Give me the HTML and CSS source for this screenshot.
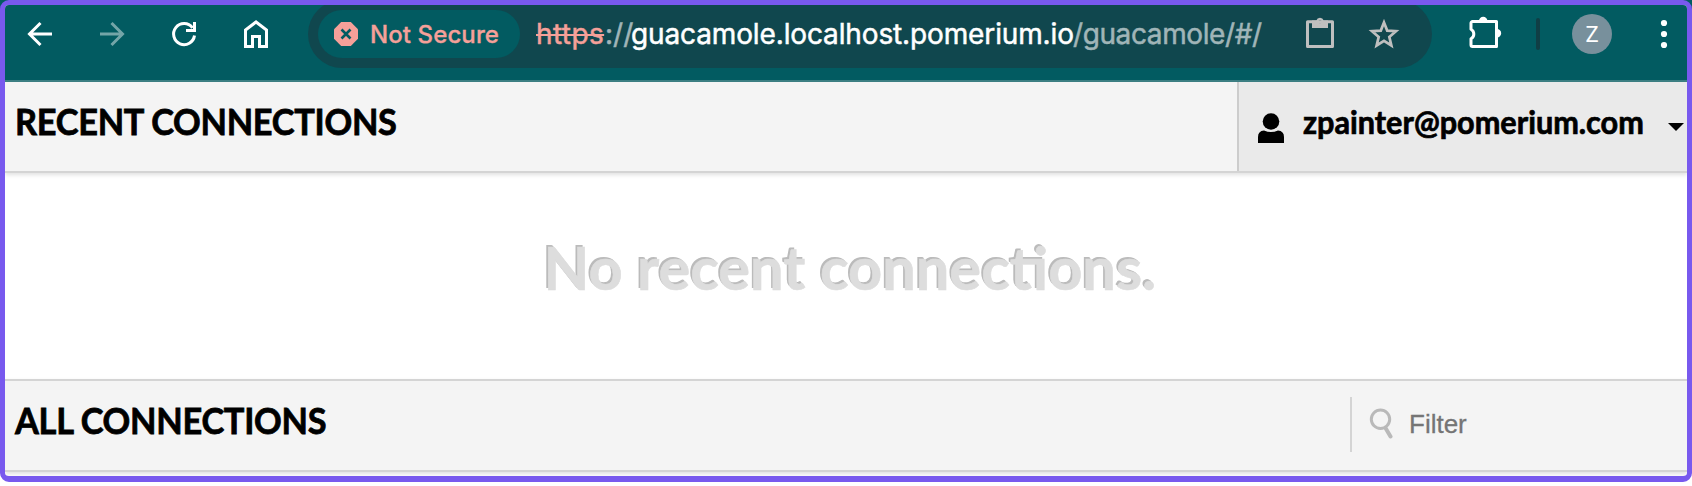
FILE: index.html
```html
<!DOCTYPE html>
<html lang="en">
<head>
<meta charset="utf-8">
<title>Recent Connections</title>
<link rel="stylesheet" href="styles.css">
</head>
<body>
<div class="window">
  <div class="toolbar">
    <nav class="nav">
      <svg class="icon" viewBox="0 0 32 32"><path d="M28 16H6M16.500 5L5.500 16l11 11"/></svg>
      <svg class="icon dim" viewBox="0 0 32 32"><path d="M4 16h22M15.500 5l11 11-11 11"/></svg>
      <svg class="icon" viewBox="0 0 32 32"><path d="M26.500 17.500A10.500 10.500 0 1 1 24.500 9.800M26.500 4v8.500H18"/></svg>
      <svg class="icon" viewBox="0 0 32 32"><path d="M5.500 28.500V12L16 4l10.500 8v16.500h-7V18.500h-7v10z"/></svg>
    </nav>
    <div class="omnibox">
      <div class="chip">
        <svg class="octagon" viewBox="0 0 24 24"><path fill="#f5a099" d="M7.200 0h9.600L24 7.200v9.600L16.800 24H7.200L0 16.800V7.200z"/><path d="M7.500 7.500l9 9M16.500 7.500l-9 9" stroke="#025b61" stroke-width="2.600" fill="none"/></svg>
        <span class="chip-label">Not Secure</span>
      </div>
      <div class="url"><span class="scheme">https</span><span class="soft sep">://</span><span class="host">guacamole.localhost.pomerium.io</span><span class="soft path">/guacamole/#/</span></div>
      <svg class="action clipboard" viewBox="0 0 32 32"><path d="M3.500 4.800h25v24.700h-25z" fill="none" stroke="#bfbfbf" stroke-width="3" stroke-linejoin="round"/><path fill="#bfbfbf" fill-rule="evenodd" d="M8 3.500h4.300a3.900 3.900 0 0 1 7.400 0H24V11H8zM16 2.900a1.700 1.700 0 1 0 0 3.400a1.700 1.700 0 0 0 0-3.400z"/></svg>
      <svg class="action star" viewBox="0 0 32 32"><path d="M16 4.500l3.200 8.100 8.800.6-6.700 5.700 2.100 8.600L16 22.900l-7.400 4.600 2.100-8.600L4 13.200l8.800-.6z" fill="none" stroke="#bfbfbf" stroke-width="2.700"/></svg>
    </div>
    <svg class="puzzle" viewBox="0 0 36 36"><path d="M5.500 6.500h24v25h-24a1.500 1.500 0 0 1-1.500-1.500v-6.200a5.500 5.500 0 0 0 0-9.600V8a1.500 1.500 0 0 1 1.500-1.500z" fill="none" stroke="#fff" stroke-width="3" stroke-linejoin="round"/><path d="M12 6a4.200 4.200 0 0 1 8.400 0zM30 14a4.200 4.200 0 0 1 0 8.400z" fill="#fff"/></svg>
    <span class="divider"></span>
    <span class="avatar">Z</span>
    <svg class="more" viewBox="0 0 8 30"><circle cx="4" cy="4" r="3.100"/><circle cx="4" cy="15" r="3.100"/><circle cx="4" cy="26" r="3.100"/></svg>
  </div>

  <header class="header">
    <h2 class="title">RECENT CONNECTIONS</h2>
    <div class="user">
      <svg class="person" viewBox="0 0 26 30"><circle cx="13" cy="8.500" r="8.300"/><path d="M0 30V24q0-6 6-6.500 7 3 14 0 6 .5 6 6.500v6z"/></svg>
      <span class="user-name">zpainter@pomerium.com</span>
      <svg class="caret" viewBox="0 0 16 8"><path d="M0 0h16L8 8z"/></svg>
    </div>
  </header>

  <main class="empty"><p class="placeholder">No recent connections.</p></main>

  <header class="header all">
    <h2 class="title">ALL CONNECTIONS</h2>
    <div class="filter">
      <svg class="search" viewBox="0 0 24 32"><circle cx="11.500" cy="12.200" r="9.200"/><path class="handle" d="M16.500 21l5 8.500"/></svg>
      <span class="filter-label">Filter</span>
    </div>
  </header>
</div>
</body>
</html>
```

FILE: styles.css
```css
* { box-sizing: border-box; }
html { background: #fff; }
body { margin: 0; background: linear-gradient(#025b61, #025b61) top / 100% 20px no-repeat; font-family: Lato, sans-serif; }
.window { width: 1692px; height: 482px; border: 5px solid #7859ee; border-bottom-width: 6px; border-radius: 9px; overflow: hidden; background: #fff; display: flex; flex-direction: column; }
.toolbar { height: 77px; flex: none; background: #025b61; border-bottom: 2px solid #3d8084; display: flex; align-items: flex-start; }
.toolbar > * { flex: none; }
.nav { display: flex; gap: 40px; margin: 13px 0 0 19px; width: 284px; }
.icon { width: 32px; height: 32px; fill: none; stroke: #fff; stroke-width: 3; }
.dim { opacity: .45; }
.omnibox { width: 1124px; height: 68px; margin-top: -5px; border-radius: 34px; background: #10474e; display: flex; align-items: center; padding-left: 10px; }
.omnibox > * { flex: none; }
.chip { width: 202px; height: 48px; border-radius: 24px; background: #025b61; display: flex; align-items: center; padding-left: 16px; gap: 12px; color: #f5a099; font: 500 24px Inter, sans-serif; }
.octagon { width: 24px; height: 24px; }
.chip-label { letter-spacing: .1px; white-space: nowrap; -webkit-text-stroke: .3px; }
.url { width: 767px; margin-left: 16px; font: 400 28px/34px Inter, sans-serif; -webkit-text-stroke: .5px; white-space: nowrap; color: #fff; display: flex; }
.scheme { color: #f5a099; letter-spacing: .4px; margin-right: 1px; width: 68px; text-decoration: line-through; }
.soft { color: #a0b5b8; }
.sep { width: 26px; }
.host { width: 442px; letter-spacing: -.13px; }
.path { letter-spacing: -.4px; }
.action { width: 32px; height: 32px; overflow: visible; }
.clipboard { margin-top: -2px; margin-left: 1px; }
.star { margin-left: 32px; }
.puzzle { width: 36px; height: 36px; margin: 10px 0 0 35px; }
.divider { width: 4px; height: 32px; border-radius: 2px; background: #103e45; margin: 13px 0 0 33px; }
.avatar { width: 40px; height: 40px; border-radius: 50%; background: #78909c; margin: 9px 0 0 32px; color: #fff; font: 400 22px/41px Roboto, sans-serif; text-align: center; }
.more { width: 8px; height: 30px; fill: #fff; margin: 14px 0 0 48px; }
.header { height: 91px; flex: none; background: #f4f4f4; border-bottom: 2px solid #d4d4d4; box-shadow: 0 2px 4px rgba(0,0,0,.12); display: flex; justify-content: space-between; }
.title { margin: 0; padding: 17px 0 0; margin-left: 10px; font: 700 37px/44px Lato, sans-serif; letter-spacing: -.3px; color: #000; white-space: nowrap; transform: scaleX(.928); transform-origin: left; -webkit-text-stroke: .8px #000; }
.user { width: 450px; background: #eaeaea; border-left: 2px solid #ccc; display: flex; align-items: flex-start; }
.user > * { flex: none; }
.person { width: 26px; height: 30px; margin: 31px 0 0 19px; }
.user-name { margin: 22px 0 0 19px; width: 345px; font: 700 32px/36px Lato, sans-serif; white-space: nowrap; transform: scaleX(.957); transform-origin: left; -webkit-text-stroke: .7px #000; }
.caret { width: 16px; height: 8px; margin: 41px 0 0 20px; }
.empty { height: 206px; flex: none; display: flex; justify-content: center; }
.placeholder { margin: 0 0 0 7px; padding-top: 59px; font: 700 60px/70px Lato, sans-serif; color: #ddd; text-shadow: -2px -2px 0 #bbb; white-space: nowrap; transform: scaleX(.992); -webkit-text-stroke: .6px #ddd; }
.all { border-top: 2px solid #d4d4d4; height: 93px; }
.filter { width: 337px; height: 55px; margin-top: 16px; border-left: 2px solid #d4d4d4; display: flex; align-items: flex-start; }
.search { width: 24px; height: 32px; margin: 10px 0 0 17px; fill: none; stroke: #b9b9b9; stroke-width: 3; }
.handle { stroke-width: 4; stroke-linecap: round; }
.filter-label { margin: 12px 0 0 16px; font: 26px/30px "Liberation Sans", sans-serif; color: #757575; -webkit-text-stroke: .3px; }
```
